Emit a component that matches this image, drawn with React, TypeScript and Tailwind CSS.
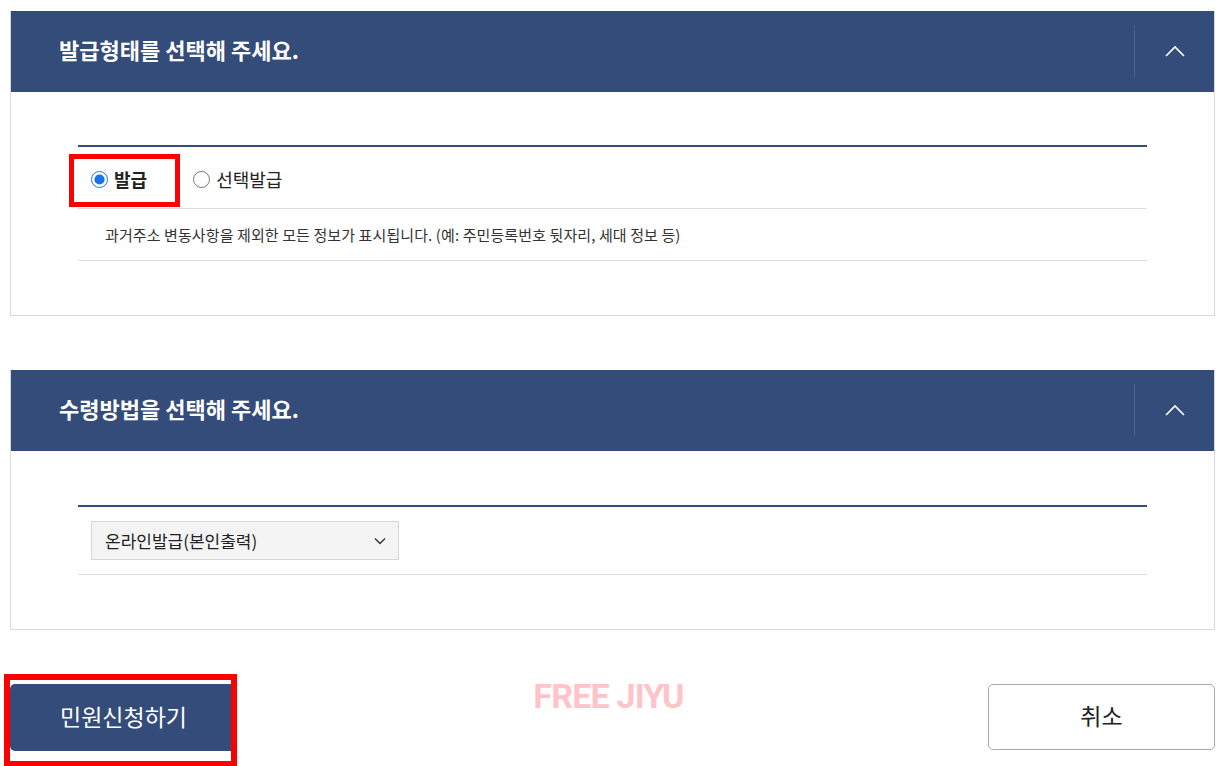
import { useState } from "react";

const font = { fontFamily: '"Noto Sans CJK KR", "Noto Sans", sans-serif' };

function ChevronUp() {
  return (
    <svg width="20" height="12" viewBox="0 0 20 12" fill="none">
      <path d="M1 11 L10 2 L19 11" stroke="white" strokeWidth="1.6" />
    </svg>
  );
}

function PanelHeader({ title }: { title: string }) {
  return (
    <div className="flex h-[81px] items-center bg-[#344c79]">
      <h2 className="flex-1 pb-[5px] pl-[48px] text-[22px] font-bold text-white">
        {title}
      </h2>
      <div className="h-[53px] w-px bg-[#4a6090]" />
      <div className="flex w-[79px] items-center justify-center pb-[2px]">
        <ChevronUp />
      </div>
    </div>
  );
}

export default function App() {
  const [kind, setKind] = useState("all");

  return (
    <div className="h-[766px] w-[1224px] overflow-hidden bg-white pl-[10px] pr-[9px] pt-[11px]" style={font}>
      {/* 발급형태 */}
      <section className="border border-[#d9d9d9] border-t-0">
        <PanelHeader title="발급형태를 선택해 주세요." />
        <div className="px-[67px] pb-[54px] pt-[53px]">
          <div className="border-t-2 border-[#344c79]">
            <div className="relative flex h-[62px] items-center border-b border-[#dedede] pl-[13px] pt-[3px]">
              <label className="flex items-center gap-[6px] text-[18px] font-bold text-[#222]">
                <input
                  type="radio"
                  name="kind"
                  checked={kind === "all"}
                  onChange={() => setKind("all")}
                  className="h-[17px] w-[17px] accent-[#1a73e8]"
                />
                발급
              </label>
              <label className="ml-[46px] flex items-center gap-[6px] text-[18px] text-[#222]">
                <input
                  type="radio"
                  name="kind"
                  checked={kind === "select"}
                  onChange={() => setKind("select")}
                  className="h-[17px] w-[17px]"
                />
                선택발급
              </label>
              {/* 강조 표시 */}
              <div className="pointer-events-none absolute left-[-9px] top-[7px] h-[53px] w-[111px] border-[5px] border-[#ff0000]" />
            </div>
            <div className="flex h-[52px] items-center border-b border-[#dedede] pl-[27px] pt-[1px] text-[15px] tracking-[0.1px] text-[#333]">
              과거주소 변동사항을 제외한 모든 정보가 표시됩니다. (예: 주민등록번호 뒷자리, 세대 정보 등)
            </div>
          </div>
        </div>
      </section>

      {/* 수령방법 */}
      <section className="mt-[54px] border border-[#d9d9d9] border-t-0">
        <PanelHeader title="수령방법을 선택해 주세요." />
        <div className="px-[67px] pb-[54px] pt-[54px]">
          <div className="border-t-2 border-[#344c79]">
            <div className="flex h-[68px] items-center border-b border-[#dedede] pl-[13px]">
              <div className="flex h-[39px] w-[308px] items-center justify-between border border-[#d6d6d6] bg-[#f4f4f4] pl-[13px] pr-[12px] text-[17px] text-[#222]">
                <span>온라인발급(본인출력)</span>
                <svg width="12" height="8" viewBox="0 0 12 8" fill="none">
                  <path d="M1 1.5 L6 6.5 L11 1.5" stroke="#333" strokeWidth="1.4" />
                </svg>
              </div>
            </div>
          </div>
        </div>
      </section>

      {/* 버튼 */}
      <div className="mt-[54px] flex items-start">
        <div className="relative">
          <button className="h-[67px] w-[227px] rounded-[5px] bg-[#344c79] pb-[3px] text-[23px] text-white">
            민원신청하기
          </button>
          <div className="pointer-events-none absolute left-[-6px] top-[-10px] h-[93px] w-[233px] border-[6px] border-[#ff0000]" />
        </div>
        <div
          className="mt-[-13px] flex-1 pr-[8px] text-center text-[34px] font-bold tracking-[-0.8px] text-[#ffc4ca]"
          style={{ fontFamily: 'Roboto, "Liberation Sans", sans-serif' }}
        >
          FREE JIYU
        </div>
        <button className="h-[66px] w-[227px] rounded-[5px] border border-[#aaa] bg-white pb-[3px] text-[23px] text-[#222]">
          취소
        </button>
      </div>
    </div>
  );
}
